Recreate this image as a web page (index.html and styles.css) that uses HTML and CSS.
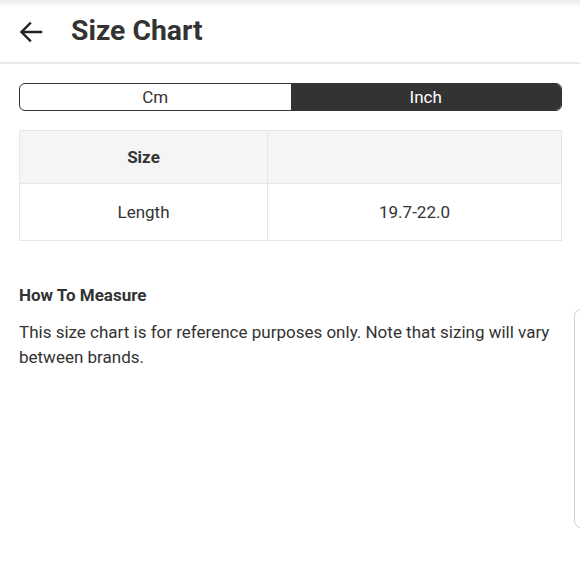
FILE: index.html
```html
<!DOCTYPE html>
<html>
<head>
<meta charset="utf-8">
<link rel="stylesheet" href="styles.css">
</head>
<body>
<header class="topbar">
  <svg class="back" width="24" height="22" viewBox="0 0 24 22"><path d="M22 11H3M11 2.5L2.5 11 11 19.5" fill="none" stroke="#222" stroke-width="2.4" stroke-linecap="square"/></svg>
  <h1 class="title">Size Chart</h1>
</header>
<main class="content">
  <div class="toggle">
    <div class="opt">Cm</div>
    <div class="opt active">Inch</div>
  </div>
  <table class="chart">
    <tr class="head"><th class="c1">Size</th><th class="c2"></th></tr>
    <tr class="row"><td>Length</td><td>19.7-22.0</td></tr>
  </table>
  <h2 class="measure">How To Measure</h2>
  <p class="note">This size chart is for reference purposes only. Note that sizing will vary between brands.</p>
</main>
<div class="edge"></div>
</body>
</html>
```
FILE: styles.css
```css
html, body { margin: 0; padding: 0; background: #fff; }
body { font-family: Roboto, "Liberation Sans", sans-serif; color: #333; width: 580px; height: 579px; overflow: hidden; position: relative; }
.topbar { height: 62px; display: flex; align-items: center; padding-left: 19px; border-bottom: 2px solid #e8e8e8; background: linear-gradient(#ececec 0, #fff 7px); }
.back { display: block; margin-top: 1px; }
.title { margin: -2px 0 0 28px; font-size: 28.3px; font-weight: 700; color: #333; }
.content { padding: 19px 18px 0 19px; }
.toggle { display: flex; height: 28px; border: 1.5px solid #333; border-radius: 6px; overflow: hidden; box-sizing: border-box; }
.opt { flex: 1; display: flex; align-items: center; justify-content: center; font-size: 17px; color: #333; }
.opt.active { background: #333; color: #fff; }
.chart { width: 100%; margin-top: 19px; border-collapse: collapse; font-size: 17px; table-layout: fixed; }
.chart th, .chart td { border: 1px solid #e6e6e6; text-align: center; padding: 0; }
.chart .c1 { width: 247px; }
.head th { height: 52px; background: #f5f5f5; font-weight: 700; color: #333; }
.row td { height: 56px; color: #333; }
.measure { margin: 44px 0 0 0; font-size: 17px; font-weight: 700; color: #333; }
.note { margin: 15px 0 0 0; font-size: 17px; line-height: 25px; color: #333; }
.edge { position: absolute; left: 574px; top: 309px; width: 14px; height: 219px; border: 1px solid #cfcfcf; border-radius: 8px; box-sizing: border-box; }
```
